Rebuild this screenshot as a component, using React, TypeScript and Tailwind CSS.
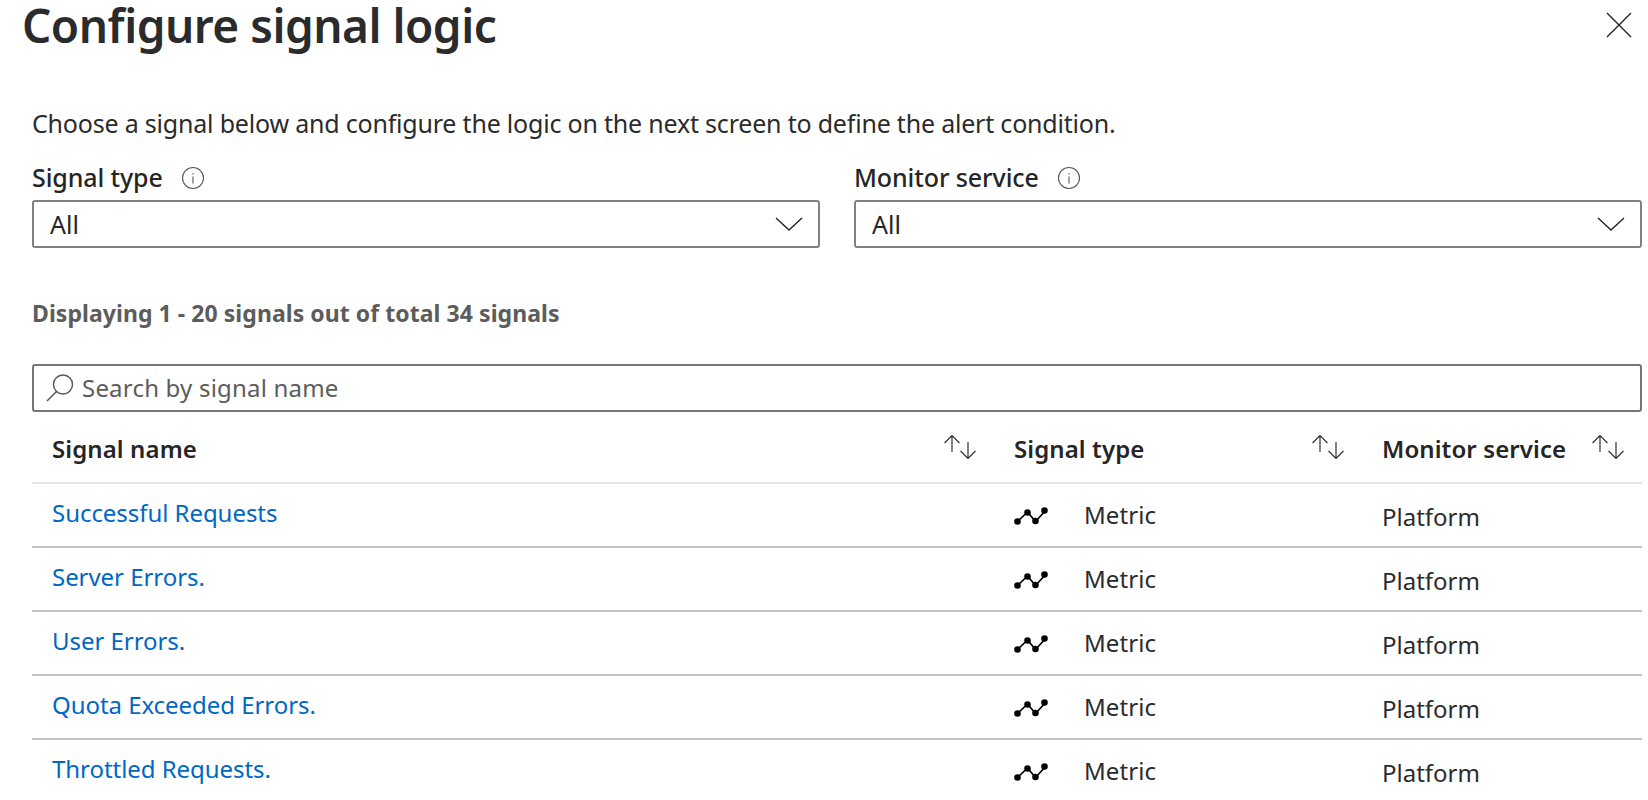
import React from 'react';

const font = { fontFamily: '"Noto Sans", sans-serif' };

const signals = ['Successful Requests', 'Server Errors.', 'User Errors.', 'Quota Exceeded Errors.', 'Throttled Requests.'];

const InfoIcon = () => (
  <svg width="24" height="24" viewBox="0 0 24 24" fill="none" stroke="#555" strokeWidth="1.1">
    <circle cx="12" cy="12" r="10.500" />
    <path d="M12 10.500v7M12 7v1.400" />
  </svg>
);

const Chevron = () => (
  <svg width="30" height="16" viewBox="0 0 30 16" fill="none" stroke="#222" strokeWidth="1.4">
    <path d="M2 2l13 12L28 2" />
  </svg>
);

const SortIcon = () => (
  <svg width="34" height="24" viewBox="0 0 34 24" fill="none" stroke="#333" strokeWidth="1.2">
    <path d="M9 17V0.500M1.500 8L9 0.500 16.500 8" />
    <path d="M25 7v16.500M17.500 16L25 23.500 32.500 16" />
  </svg>
);

const MetricIcon = () => (
  <svg width="34" height="20" viewBox="0 0 34 20" fill="#000" stroke="#000" strokeWidth="1.6">
    <path d="M3 16L13.500 6l8 9.500L32 4" fill="none" />
    <circle cx="3.500" cy="15.500" r="2.500" />
    <circle cx="13.500" cy="6.500" r="2.500" />
    <circle cx="21.500" cy="15" r="2.500" />
    <circle cx="30.500" cy="4.500" r="2.500" />
  </svg>
);

const SelectField = ({ label }: { label: string }) => (
  <div className="flex-1">
    <div className="flex h-[33px] items-center gap-[18px]">
      <span className="text-[25px] font-medium text-[#252525] tracking-[-0.1px]">{label}</span>
      <InfoIcon />
    </div>
    <div className="mt-[6px] flex h-[48px] items-center justify-between rounded-[3px] border-2 border-[#808080] pl-[16px] pr-[14px]">
      <span className="pt-[2px] text-[25px] text-[#252525]">All</span>
      <Chevron />
    </div>
  </div>
);

const HeaderCell = ({ label, width }: { label: string; width: string }) => (
  <div className={`flex items-center justify-between ${width}`}>
    <span className="pt-[3px] text-[24px] font-semibold text-[#252525] tracking-[0.1px]">{label}</span>
    <SortIcon />
  </div>
);

const App: React.FC = () => {
  return (
    <div className="relative h-[800px] w-[1648px] overflow-hidden bg-white" style={font}>
      <div className="flex h-[50px] items-center pl-[22px]">
        <h1 className="text-[46px] font-semibold leading-[48px] text-[#2b2b2b] tracking-[-0.5px]">Configure signal logic</h1>
      </div>
      <button className="absolute right-[16px] top-[12px]">
        <svg width="26" height="26" viewBox="0 0 26 26" fill="none" stroke="#222" strokeWidth="1.4">
          <path d="M1 1l24 24M25 1L1 25" />
        </svg>
      </button>

      <div className="pl-[32px] pr-[6px] pt-[52px]">
        <p className="text-[25px] leading-[42px] text-[#2b2b2b] tracking-[-0.2px]">
          Choose a signal below and configure the logic on the next screen to define the alert condition.
        </p>

        <div className="mt-[17px] flex gap-[34px]">
          <SelectField label="Signal type" />
          <SelectField label="Monitor service" />
        </div>

        <p className="mt-[49px] text-[23px] font-bold leading-[32px] text-[#5c5c5c] tracking-[0.06px]">
          Displaying 1 - 20 signals out of total 34 signals
        </p>

        <div className="mt-[35px] flex h-[48px] items-center gap-[7px] rounded-[3px] border-2 border-[#767676] pl-[11px]">
          <svg width="30" height="30" viewBox="0 0 30 30" fill="none" stroke="#555" strokeWidth="1.4">
            <circle cx="18" cy="11.500" r="9.500" />
            <path d="M11.500 18.500L2 28" />
          </svg>
          <span className="text-[24px] text-[#5c5c5c] tracking-[0.2px]">Search by signal name</span>
        </div>

        <div className="flex h-[72px] items-center border-b-2 border-[#e6e6e6] pl-[20px]">
          <HeaderCell label="Signal name" width="w-[925px] mr-[37px]" />
          <HeaderCell label="Signal type" width="w-[331px] mr-[37px]" />
          <HeaderCell label="Monitor service" width="w-[243px]" />
        </div>

        {signals.map((name) => (
          <div key={name} className="flex h-[64px] items-center border-b-2 border-[#c4c4c4] pl-[20px]">
            <a className="mb-[4px] w-[962px] text-[24px] text-[#0067c5] tracking-[-0.05px]">{name}</a>
            <div className="flex w-[368px] items-center gap-[36px] pt-[2px]">
              <MetricIcon />
              <span className="mb-[2px] text-[24px] text-[#2b2b2b] tracking-[0.1px]">Metric</span>
            </div>
            <span className="pt-[3px] text-[24px] text-[#2b2b2b]">Platform</span>
          </div>
        ))}
      </div>
    </div>
  );
};

export default App;
